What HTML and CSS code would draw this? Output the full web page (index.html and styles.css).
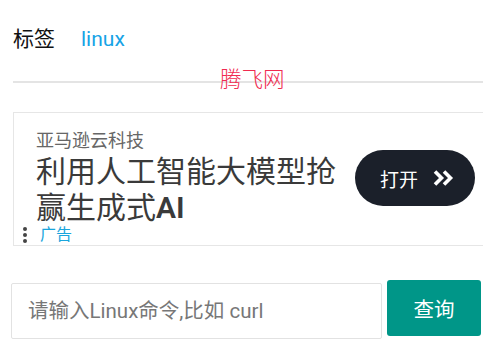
FILE: index.html
```html
<!DOCTYPE html>
<html lang="zh-CN">
<head>
<meta charset="utf-8">
<link rel="stylesheet" href="styles.css">
</head>
<body>
<div class="page">
  <div class="tags">
    <span class="tag-label">标签</span>
    <a class="tag-link" href="#">linux</a>
  </div>
  <div class="divider">
    <span class="divider-text">腾飞网</span>
  </div>
  <div class="ad">
    <div class="ad-main">
      <div class="ad-copy">
        <div class="ad-brand">亚马逊云科技</div>
        <div class="ad-title">利用人工智能大模型抢赢生成式<span class="ad-ai">AI</span></div>
      </div>
      <div class="ad-btn">
        <span>打开</span>
        <svg class="ad-chev" width="22" height="16" viewBox="0 0 22 16"><path d="M2 1.5 L8.5 8 L2 14.5" fill="none" stroke="#fff" stroke-width="3.6" stroke-linejoin="miter"/><path d="M11 1.5 L17.5 8 L11 14.5" fill="none" stroke="#fff" stroke-width="3.6" stroke-linejoin="miter"/></svg>
      </div>
    </div>
    <div class="ad-foot">
      <span class="ad-dots"><i></i><i></i><i></i></span>
      <span class="ad-label">广告</span>
    </div>
  </div>
  <div class="search">
    <input class="search-input" type="text" placeholder="请输入Linux命令,比如 curl">
    <button class="search-btn">查询</button>
  </div>
</div>
</body>
</html>
```
FILE: styles.css
```css
html, body {
  margin: 0;
  padding: 0;
  background: #fff;
  overflow: hidden;
}
body {
  font-family: Roboto, "Noto Sans CJK SC", sans-serif;
  color: #222;
}
.page {
  width: 483px;
  height: 349px;
  overflow: hidden;
}
.tags {
  display: flex;
  align-items: center;
  padding: 27px 0 0 13px;
  height: 24px;
  font-size: 21px;
  line-height: 24px;
}
.tag-label {
  color: #111;
}
.tag-link {
  margin-left: 26px;
  color: #16a3e6;
  text-decoration: none;
}
.divider {
  position: relative;
  margin: 30px 0 0 13px;
  height: 2px;
  background: #e4e4e4;
}
.divider-text {
  position: absolute;
  left: 207px;
  top: -14px;
  font-size: 21.5px;
  line-height: 26px;
  color: #f02a50;
  font-weight: 300;
}
.ad {
  margin: 29px 0 0 13px;
  width: 490px;
  height: 132px;
  border: 1px solid #e6e6e6;
  box-sizing: content-box;
}
.ad-main {
  display: flex;
  align-items: flex-start;
  padding: 17px 0 0 22px;
}
.ad-copy {
  width: 310px;
}
.ad-brand {
  font-size: 18px;
  line-height: 22px;
  color: #666;
}
.ad-title {
  margin-top: 2px;
  font-size: 30px;
  line-height: 36px;
  color: #3a3a3a;
}
.ad-ai {
  font-weight: 600;
}
.ad-btn {
  margin: 20px 0 0 9px;
  width: 120px;
  height: 56px;
  border-radius: 28px;
  background: #1b202a;
  color: #fff;
  display: flex;
  align-items: center;
  padding-left: 25px;
  box-sizing: border-box;
  font-size: 19px;
}
.ad-chev {
  margin-left: 15px;
}
.ad-foot {
  display: flex;
  align-items: center;
  padding-left: 9px;
  margin-top: -1px;
  height: 20px;
}
.ad-dots {
  display: flex;
  flex-direction: column;
  gap: 2px;
  width: 5px;
}
.ad-dots i {
  display: block;
  width: 4px;
  height: 4px;
  border-radius: 50%;
  background: #444;
}
.ad-label {
  margin-left: 12px;
  font-size: 16px;
  line-height: 18px;
  color: #1aa5dc;
}
.search {
  display: flex;
  align-items: flex-start;
  padding: 34px 0 0 11px;
}
.search-input {
  margin-top: 3px;
  width: 371px;
  height: 56px;
  box-sizing: border-box;
  border: 1px solid #e2e2e2;
  border-radius: 2px;
  padding: 0 0 0 16px;
  font-family: Roboto, "Noto Sans CJK SC", sans-serif;
  font-size: 20.5px;
  outline: none;
}
.search-input::placeholder {
  color: #777;
}
.search-btn {
  margin-left: 5px;
  width: 94px;
  height: 56px;
  border: none;
  border-radius: 3px;
  background: #009688;
  color: #fff;
  font-family: Roboto, "Noto Sans CJK SC", sans-serif;
  font-size: 20.5px;
  padding: 0;
}
```
